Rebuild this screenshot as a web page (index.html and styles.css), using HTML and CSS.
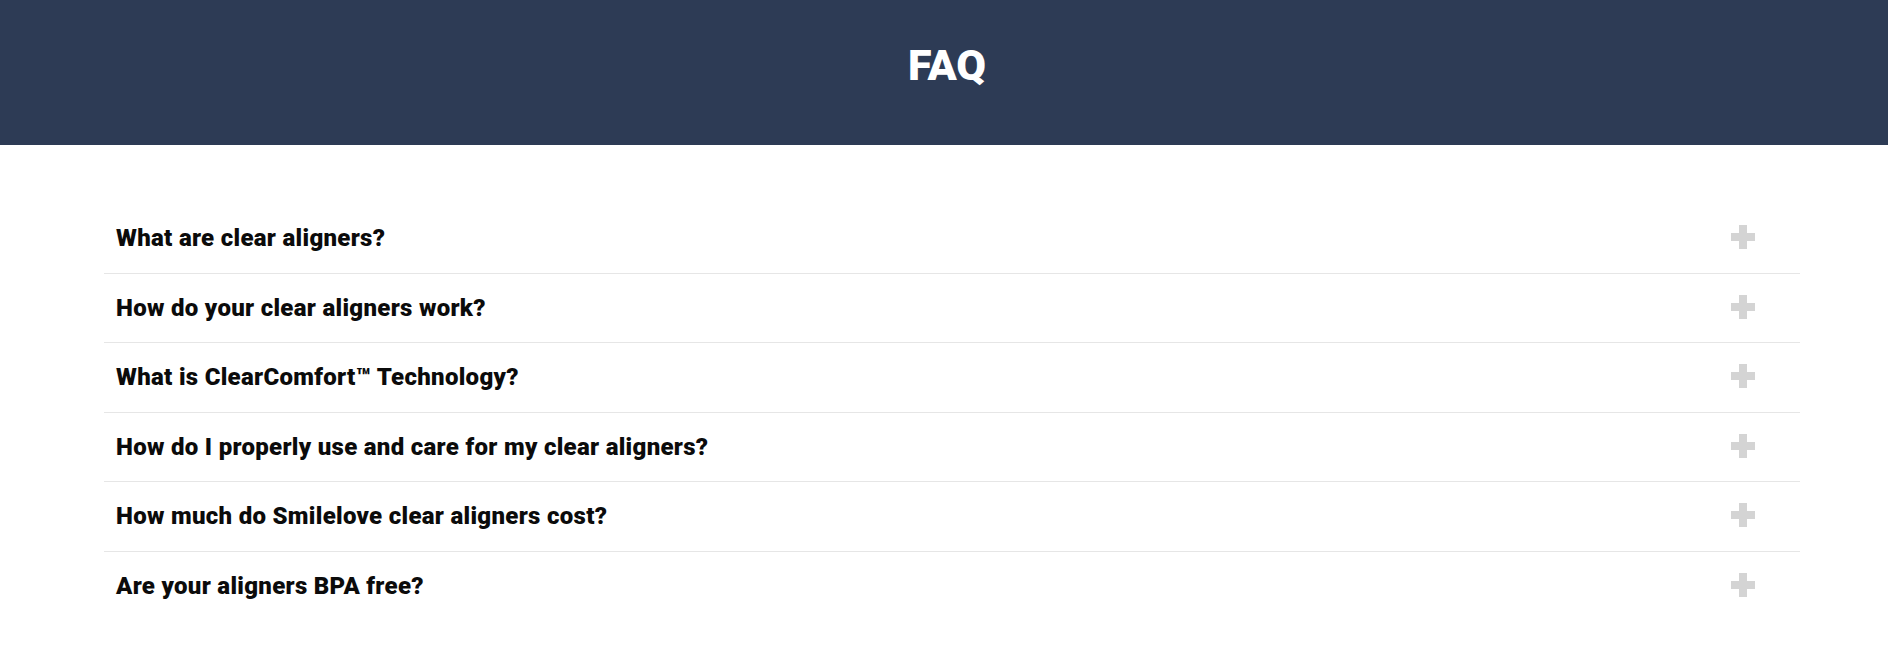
FILE: index.html
```html
<!DOCTYPE html>
<html lang="en">
<head>
<meta charset="utf-8">
<title>FAQ</title>
<link rel="stylesheet" href="styles.css">
</head>
<body>
<header class="hero">
  <h1 class="hero-title">FAQ</h1>
</header>
<main class="faq">
  <div class="faq-item"><span class="faq-q">What are clear aligners?</span><span class="plus"></span></div>
  <div class="faq-item"><span class="faq-q">How do your clear aligners work?</span><span class="plus"></span></div>
  <div class="faq-item"><span class="faq-q">What is ClearComfort™ Technology?</span><span class="plus"></span></div>
  <div class="faq-item"><span class="faq-q">How do I properly use and care for my clear aligners?</span><span class="plus"></span></div>
  <div class="faq-item"><span class="faq-q">How much do Smilelove clear aligners cost?</span><span class="plus"></span></div>
  <div class="faq-item last"><span class="faq-q">Are your aligners BPA free?</span><span class="plus"></span></div>
</main>
</body>
</html>
```
FILE: styles.css
```css
* { box-sizing: border-box; }
html, body { margin: 0; padding: 0; background: #fff; }
body { font-family: Roboto, "Liberation Sans", sans-serif; color: #0b0b0b; }

.hero {
  height: 145px;
  background: #2d3b55;
  display: flex;
  justify-content: center;
  padding-top: 40px;
}
.hero-title {
  margin: 0 0 0 6px;
  color: #fff;
  font-size: 43px;
  line-height: 50px;
  font-weight: 900;
}

.faq {
  margin: 59px 0 0 104px;
  width: 1696px;
}
.faq-item {
  display: flex;
  align-items: center;
  justify-content: space-between;
  padding: 19.25px 45px 19.25px 12px;
  border-bottom: 1px solid #e6e6e6;
}
.faq-item.last { border-bottom: none; }
.faq-q {
  font-size: 24px;
  line-height: 30px;
  font-weight: 900;
  letter-spacing: 0.3px;
}
.plus {
  position: relative;
  width: 24px;
  height: 24px;
  flex: none;
  margin-top: -2px;
}
.plus::before, .plus::after {
  content: "";
  position: absolute;
  background: #d4d4d4;
}
.plus::before { left: 0; right: 0; top: 8px; height: 8px; }
.plus::after { top: 0; bottom: 0; left: 8px; width: 8px; }
```
